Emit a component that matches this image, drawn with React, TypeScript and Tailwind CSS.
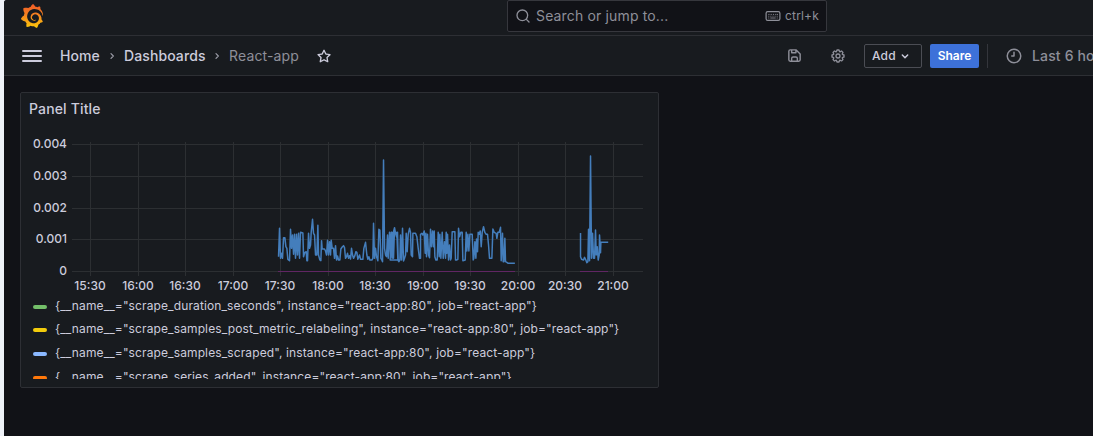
import React from 'react';
import { SiGrafana } from 'react-icons/si';

const STAR =
  'M22,9.67A1,1,0,0,0,21.14,9l-5.69-.83L12.9,3a1,1,0,0,0-1.8,0L8.55,8.16,2.86,9a1,1,0,0,0-.81.68,1,1,0,0,0,.25,1l4.13,4-1,5.68A1,1,0,0,0,6.9,21.44L12,18.77l5.1,2.67a.93.93,0,0,0,.46.12,1,1,0,0,0,.59-.19,1,1,0,0,0,.4-1l-1-5.68,4.13-4A1,1,0,0,0,22,9.67Zm-6.15,4a1,1,0,0,0-.29.88l.72,4.2-3.76-2a1.06,1.06,0,0,0-.94,0l-3.76,2,.72-4.2a1,1,0,0,0-.29-.88l-3-3,4.21-.61a1,1,0,0,0,.76-.55L12,5.7l1.88,3.82a1,1,0,0,0,.76.55l4.21.61Z';
const SAVE =
  'M20.71 9.29l-6-6a1 1 0 0 0-.32-.21A1.09 1.09 0 0 0 14 3H6a3 3 0 0 0-3 3v12a3 3 0 0 0 3 3h12a3 3 0 0 0 3-3v-8a1 1 0 0 0-.29-.71ZM9 5h4v2H9Zm6 14H9v-3a1 1 0 0 1 1-1h4a1 1 0 0 1 1 1Zm4-1a1 1 0 0 1-1 1h-1v-3a3 3 0 0 0-3-3h-4a3 3 0 0 0-3 3v3H6a1 1 0 0 1-1-1V6a1 1 0 0 1 1-1h1v3a1 1 0 0 0 1 1h6a1 1 0 0 0 1-1V6.41l4 4Z';
const COG =
  'M21.32,9.55l-1.89-.63.89-1.78A1,1,0,0,0,20.13,6L18,3.87a1,1,0,0,0-1.15-.19l-1.78.89-.63-1.89A1,1,0,0,0,13.5,2h-3a1,1,0,0,0-.95.68L8.92,4.57,7.14,3.68A1,1,0,0,0,6,3.87L3.87,6a1,1,0,0,0-.19,1.15l.89,1.78-1.89.63A1,1,0,0,0,2,10.5v3a1,1,0,0,0,.68.95l1.89.63-.89,1.78A1,1,0,0,0,3.87,18L6,20.13a1,1,0,0,0,1.15.19l1.78-.89.63,1.89a1,1,0,0,0,.95.68h3a1,1,0,0,0,.95-.68l.63-1.89,1.78.89A1,1,0,0,0,18,20.13L20.13,18a1,1,0,0,0,.19-1.15l-.89-1.78,1.89-.63A1,1,0,0,0,22,13.5v-3A1,1,0,0,0,21.32,9.55ZM20,12.78l-1.2.4A2,2,0,0,0,17.64,16l.57,1.14-1.1,1.1L16,17.64a2,2,0,0,0-2.79,1.16l-.4,1.2H11.22l-.4-1.2A2,2,0,0,0,8,17.64l-1.14.57-1.1-1.1L6.36,16A2,2,0,0,0,5.2,13.18L4,12.78V11.22l1.2-.4A2,2,0,0,0,6.36,8L5.79,6.89l1.1-1.1L8,6.36A2,2,0,0,0,10.82,5.2l.4-1.2h1.56l.4,1.2A2,2,0,0,0,16,6.36l1.14-.57,1.1,1.1L17.64,8a2,2,0,0,0,1.16,2.79l1.2.4ZM12,8a4,4,0,1,0,4,4A4,4,0,0,0,12,8Zm0,6a2,2,0,1,1,2-2A2,2,0,0,1,12,14Z';

function Glyph({ d, className }: { d: string; className: string }) {
  return (
    <svg viewBox="0 0 24 24" fill="currentColor" className={className}>
      <path d={d} />
    </svg>
  );
}

function Stroke({ d, className, width = 2 }: { d: string; className: string; width?: number }) {
  return (
    <svg
      viewBox="0 0 24 24"
      fill="none"
      stroke="currentColor"
      strokeWidth={width}
      strokeLinecap="round"
      strokeLinejoin="round"
      className={className}
    >
      <path d={d} />
    </svg>
  );
}

function TopBar() {
  return (
    <div className="flex h-9 items-start border-b border-[#2d2f34] bg-[#181b1f]">
      <svg width="0" height="0" className="shrink-0">
        <defs>
          <linearGradient id="brand" x1="0" y1="0" x2="0" y2="1">
            <stop offset="0" stopColor="#f05a28" />
            <stop offset="0.45" stopColor="#f58220" />
            <stop offset="1" stopColor="#fbca0a" />
          </linearGradient>
        </defs>
      </svg>
      <SiGrafana className="ml-[16px] mt-1 h-6 w-6 shrink-0" style={{ fill: 'url(#brand)' }} />
      <div className="ml-[463px] flex h-8 w-80 shrink-0 items-center rounded-[2px] border border-[#36373d] bg-[#111217] pl-[7px] pr-[7px] text-[#8e8f99]">
        <Stroke d="M21 21l-4.3-4.3M11 3a8 8 0 1 0 0 16a8 8 0 1 0 0-16" className="h-4 w-4" />
        <span className="ml-[5px] text-sm tracking-[0.15px]">Search or jump to...</span>
        <svg viewBox="0 0 16 12" className="ml-auto h-3 w-4" fill="none" stroke="currentColor">
          <rect x="1.1" y="1.6" width="13.8" height="8.8" rx="1.6" strokeWidth="1.2" />
          <path d="M3.3 4.4h1.2M5.6 4.4h1.2M7.9 4.4h1.2M10.2 4.4h1.2M12 4.4h1M3.3 6.2h1M5.4 6.2h1M7.5 6.2h1M9.6 6.2h1M11.7 6.2h1M3.3 8h1M5.3 8h5.4M11.7 8h1" strokeWidth="0.9" />
        </svg>
        <span className="ml-1 text-xs tracking-[0.18px]">ctrl+k</span>
      </div>
    </div>
  );
}

function NavBar() {
  return (
    <div className="flex h-10 items-center border-b border-[#2d2f34] bg-[#181b1f] text-sm tracking-[0.15px] text-[#ccccdc]">
      <div className="ml-[18px] flex w-5 shrink-0 flex-col gap-[3px]">
        <div className="h-[2px] rounded-full bg-[#ccccdc]" />
        <div className="h-[2px] rounded-full bg-[#ccccdc]" />
        <div className="h-[2px] rounded-full bg-[#ccccdc]" />
      </div>
      <span className="ml-[18px] w-[40px] shrink-0 font-medium tracking-[0.1px]">Home</span>
      <Stroke d="M10.5 8.5l3.5 3.5l-3.5 3.5" width={1.8} className="ml-1 h-4 w-4 shrink-0 text-[#9a9ba6]" />
      <span className="ml-1 w-[81px] shrink-0 font-medium tracking-[0.1px]">Dashboards</span>
      <Stroke d="M10.5 8.5l3.5 3.5l-3.5 3.5" width={1.8} className="ml-1 h-4 w-4 shrink-0 text-[#9a9ba6]" />
      <span className="ml-1 w-[71px] shrink-0 whitespace-nowrap text-[#8e8f99]">React-app</span>
      <Glyph d={STAR} className="ml-4 h-4 w-4 shrink-0" />
      <Glyph d={SAVE} className="ml-[454px] h-[17px] w-[17px] shrink-0 text-[#8e8f99]" />
      <Glyph d={COG} className="ml-[27px] h-4 w-4 shrink-0 text-[#8e8f99]" />
      <button className="ml-[18px] flex h-6 w-[58px] shrink-0 items-center rounded-[2px] border border-[#4b4d54] pl-[7px] text-xs font-medium">
        Add
        <Stroke d="M8 10.5l4 4l4-4" width={2.2} className="ml-[1px] h-4 w-4" />
      </button>
      <button className="ml-2 h-6 w-[49px] shrink-0 rounded-[2px] bg-[#3d71d9] text-xs font-semibold tracking-normal text-white">
        Share
      </button>
      <div className="ml-2 h-6 w-px shrink-0 bg-[#34363c]" />
      <Glyph
        d="M12,6a1,1,0,0,0-1,1v4H9a1,1,0,0,0,0,2h3a1,1,0,0,0,1-1V7A1,1,0,0,0,12,6Zm0-4A10,10,0,1,0,22,12,10,10,0,0,0,12,2Zm0,18a8,8,0,1,1,8-8A8,8,0,0,1,12,20Z"
        className="ml-[17px] h-[18px] w-[18px] shrink-0 text-[#8e8f99]"
      />
      <span className="ml-[9px] shrink-0 whitespace-nowrap font-medium text-[#8e8f99]">Last 6 hours</span>
    </div>
  );
}

const X_TICKS: [string, number][] = [
  ['15:30', 90.5], ['16:00', 138.5], ['16:30', 185.5], ['17:00', 233.5],
  ['17:30', 280.5], ['18:00', 328.5], ['18:30', 375.5], ['19:00', 423.5],
  ['19:30', 470.5], ['20:00', 518.5], ['20:30', 565.5], ['21:00', 613.5],
];
const Y_TICKS: [string, number][] = [
  ['0.004', 144.5], ['0.003', 176.5], ['0.002', 208.5], ['0.001', 239.5], ['0', 271.5],
];

const EARLY =
  '25,335 28,250 31,340 34,325 37,340 40,278 44,278 47,305 50,310 53,343 58,347 61,253 64,310 67,270 70,328 73,268 76,340 79,268 82,330 85,265 88,340 91,262 98,264 100,335 104,322 108,320 110,347 112,347 115,265 118,310 121,300 123,262 127,223 130,265 133,270 136,330 140,330 143,241 145,330 149,345 152,347 154,287 156,312 163,312 166,318 169,330 172,286 175,330 178,290 181,330 183,286 186,310 190,310 193,340 196,302 199,345 202,333 205,345 209,345 212,312 216,306 220,302 223,308 226,340 229,335 232,325 235,340 238,332 241,342 244,310 247,330 250,340 254,332 257,320 260,322 263,343 268,330 271,343 278,343 281,310 286,292 290,330 293,343 296,335 299,345 305,345 308,340 310,235 313,340 316,310 319,335 323,347 326,253 329,255 332,340 335,345 337,350 340,45 343,310 346,330 349,335 352,270 354,340 358,262 361,340 364,262 367,335 370,260 373,248 376,265 380,262 383,345 386,350 389,345';
const MIDDLE =
  '0,345 3,262 6,340 8,262 10,340 13,248 16,265 19,275 22,262 24,345 26,350 29,345 31,270 34,345 37,250 40,348 43,340 46,330 48,265 51,320 54,268 58,250 61,262 63,330 67,335 68,265 76,265 80,275 84,310 88,340 91,340 91,268 95,265 98,270 102,258 105,325 107,265 109,335 112,268 115,330 118,338 121,253 124,305 127,258 130,305 132,258 134,335 137,345 141,345 144,262 147,335 149,268 152,340 156,262 159,340 163,290 166,340 168,262 170,325 172,268 175,345 178,300 181,345 183,340 186,260 194,260 196,345 199,345 203,343 205,250 208,275 212,262 216,262 218,347 225,345 228,262 230,318 233,268 236,318 239,268 246,268 249,345 251,340 254,290 257,340 259,282 262,320 264,262 267,268 270,258 273,305 276,262 280,245 284,262 288,268 292,268 295,300 298,340 305,340 308,252 312,262 318,265 320,280 323,262 327,262 331,247 333,347 337,265 339,350 341,350 344,280 346,350 350,352 354,355 374,355';
const LATE =
  '211,279 211,350 214,358 220,360 223,352 227,360 230,368 233,365 235,268 238,362 241,48 244,355 247,280 250,355 253,355 256,270 258,345 261,320 264,360 267,345 268,285 271,338 272,307 294,307';

// Samples are stored at a third of a pixel, relative to the given origin.
const place = (samples: string, ox: number, oy: number) =>
  samples
    .split(' ')
    .map((s) => {
      const [x, y] = s.split(',').map(Number);
      return `${(ox + x / 3).toFixed(2)},${(oy + y / 3).toFixed(2)}`;
    })
    .join(' ');

function Chart() {
  return (
    <svg viewBox="21 126 637 168" width="637" height="168" className="block shrink-0 font-medium">
      <g stroke="#2c2f32" strokeWidth="1">
        {Y_TICKS.map(([t, y]) => (
          <line key={t} x1="72" x2="643" y1={y} y2={y} />
        ))}
        {X_TICKS.map(([t, x]) => (
          <line key={t} x1={x} x2={x} y1="142" y2="276" />
        ))}
      </g>
      <path d="M278 271.5H515M580 271.5H608" stroke="#602663" strokeWidth="1" />
      <g fill="none" stroke="#447ebc" strokeWidth="1.5" strokeLinejoin="round">
        <polyline points={`${place(EARLY, 270.2, 145)} ${place(MIDDLE, 390.2, 145)}`} />
        <polyline points={place(LATE, 510.2, 140)} />
      </g>
      <g fill="#ccccdc" fontSize="12">
        {Y_TICKS.map(([t, y]) => (
          <text key={t} x="67" y={y + 3.7} textAnchor="end">{t}</text>
        ))}
        {X_TICKS.map(([t, x]) => (
          <text key={t} x={x - 0.5} y="290" textAnchor="middle">{t}</text>
        ))}
      </g>
    </svg>
  );
}

const LEGEND = [
  { name: 'scrape_duration_seconds', swatch: 'bg-[#73bf69]' },
  { name: 'scrape_samples_post_metric_relabeling', swatch: 'bg-[#f2cc0c]' },
  { name: 'scrape_samples_scraped', swatch: 'bg-[#8ab8ff]' },
  { name: 'scrape_series_added', swatch: 'bg-[#ff780a]' },
];

function Panel() {
  return (
    <section className="ml-4 mt-4 flex h-[296px] w-[639px] flex-col overflow-hidden rounded-[2px] border border-[#2d2f34] bg-[#181b1f]">
      <h2 className="h-[33px] shrink-0 pl-2 text-sm font-medium leading-[32px] tracking-[0.15px]">Panel Title</h2>
      <Chart />
      <div className="h-[85px] shrink-0 overflow-hidden pl-3 text-xs tracking-[0.12px]">
        {LEGEND.map((item) => (
          <div key={item.name} className="flex h-[23.6px] items-center gap-2 whitespace-nowrap">
            <span className={`mt-[2px] h-1 w-[14px] shrink-0 rounded-full ${item.swatch}`} />
            <span>{`{__name__="${item.name}", instance="react-app:80", job="react-app"}`}</span>
          </div>
        ))}
      </div>
    </section>
  );
}

export default function App() {
  return (
    <div className="flex h-[436px] w-[1093px] overflow-hidden bg-[#eff2f8] pl-1 font-['Inter',sans-serif] text-[#ccccdc]">
      <div className="min-w-0 flex-1 overflow-hidden rounded-tl-[3px] bg-[#111217]">
        <TopBar />
        <NavBar />
        <Panel />
      </div>
    </div>
  );
}
